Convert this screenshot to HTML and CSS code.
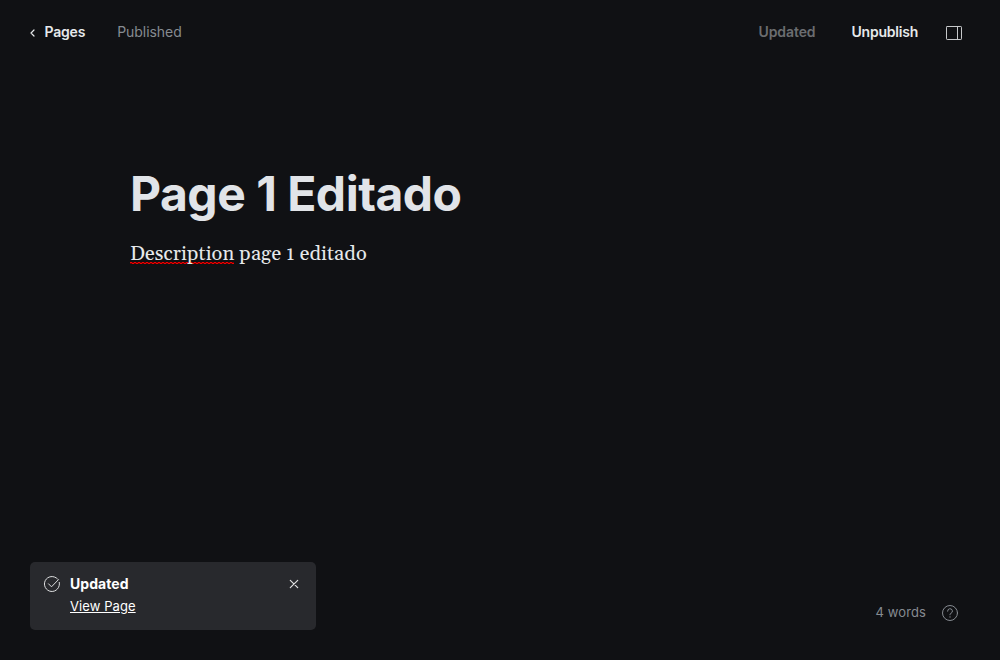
FILE: index.html
```html
<!DOCTYPE html>
<html lang="es">
<head>
<meta charset="utf-8">
<title>Page 1 Editado</title>
<link rel="stylesheet" href="styles.css">
</head>
<body>
<div class="editor">
  <header class="topbar">
    <a class="back"><svg class="chevron" width="5" height="8" viewBox="0 0 5 8"><path d="M4 1 1 4l3 3"/></svg><span>Pages</span></a>
    <span class="status">Published</span>
    <div class="actions">
      <span class="updated">Updated</span>
      <span class="unpublish">Unpublish</span>
      <svg class="panel" width="16" height="16" viewBox="0 0 16 16"><rect x=".5" y="1.5" width="15" height="13" rx=".7"/><path d="M11.5 1.5v13"/></svg>
    </div>
  </header>
  <main class="content">
    <h1 class="title">Page 1 Editado</h1>
    <p class="description"><span class="misspelled">Description</span> page 1 editado</p>
  </main>
  <footer class="bottom">
    <section class="toast">
      <svg class="check" width="16" height="16" viewBox="0 0 16 16"><path d="M15.3 6.4A7.5 7.5 0 1 1 13.4 2.8"/><path d="m4.5 7.8 3 3 7-7.2"/></svg>
      <div class="message"><strong class="message-title">Updated</strong><a class="message-link">View Page</a></div>
      <svg class="close" width="10" height="10" viewBox="0 0 10 10"><path d="m1.3 1.3 7.4 7.4M8.7 1.3 1.3 8.7"/></svg>
    </section>
    <div class="info">
      <span class="words">4 words</span>
      <svg class="help" width="16" height="16" viewBox="0 0 16 16"><circle cx="8" cy="8" r="7.5"/><path d="M5.6 6.2a2.4 2.4 0 1 1 3.4 2.1c-.7.3-1 .7-1 1.3v.2"/><circle class="dot" cx="8" cy="11.9" r=".7"/></svg>
    </div>
  </footer>
</div>
</body>
</html>
```
FILE: styles.css
```css
body { margin: 0; background: #101114; color: #e6e9eb; font-family: Inter, sans-serif; }
svg { display: block; fill: none; stroke: currentColor; stroke-linecap: round; stroke-linejoin: round; flex: none; }
.editor { box-sizing: border-box; height: 660px; padding: 20px 38px 30px 30px; display: flex; flex-direction: column; }
.topbar { display: flex; align-items: center; height: 24px; font-size: 14px; line-height: 24px; }
.back { display: flex; align-items: center; gap: 9.5px; font-weight: 600; letter-spacing: -.2px; }
.chevron { margin-top: 2px; stroke-width: 1.2; }
.status { margin-left: 32px; color: #868b91; letter-spacing: -.05px; }
.actions { margin-left: auto; display: flex; align-items: center; font-weight: 600; letter-spacing: -.22px; }
.updated { color: #6b6d70; letter-spacing: -.1px; }
.unpublish { margin: 0 28px 0 36px; }
.panel { margin-top: 2px; color: #c6c8ca; }
.content { flex: 1; padding: 120px 0 0 100px; }
.title { margin: 0; color: #e1e4e8; font-size: 48px; line-height: 60px; font-weight: 700; letter-spacing: -.5px; }
.description { margin: 15px 0 0; font: 20px/30px Gelasio, Georgia, "Noto Serif", "DejaVu Serif", serif; font-variant-numeric: oldstyle-nums; letter-spacing: .11px; }
.misspelled {
  background:
    repeating-linear-gradient(90deg, #f00000 0 2px, #700000 2px 4px) 0 calc(100% - 4px) / 100% 1px no-repeat,
    repeating-linear-gradient(90deg, #700000 0 2px, #f00000 2px 4px) 0 calc(100% - 3px) / 100% 1px no-repeat;
}
.bottom { display: flex; align-items: flex-end; justify-content: space-between; }
.toast { box-sizing: border-box; width: 286px; height: 68px; padding: 14px; display: flex; border-radius: 5px; background: #28292d; color: #fff; }
.check, .close { color: #e0e1e2; }
.message { flex: 1; display: flex; flex-direction: column; margin: -3px 0 0 10px; }
.message-title { font-size: 14px; line-height: 22px; font-weight: 700; letter-spacing: .05px; }
.message-link { font-size: 13px; line-height: 22px; text-decoration: underline; letter-spacing: .08px; }
.close { margin: 3px 3px 0 0; stroke-width: 1.2; }
.info { display: flex; align-items: center; gap: 16px; margin: 0 4px 8px 0; color: #868b91; font-size: 13px; line-height: 18px; letter-spacing: .12px; }
.words { margin-bottom: 1px; }
.help { margin-bottom: -1px; }
.dot { fill: currentColor; stroke: none; }
```
